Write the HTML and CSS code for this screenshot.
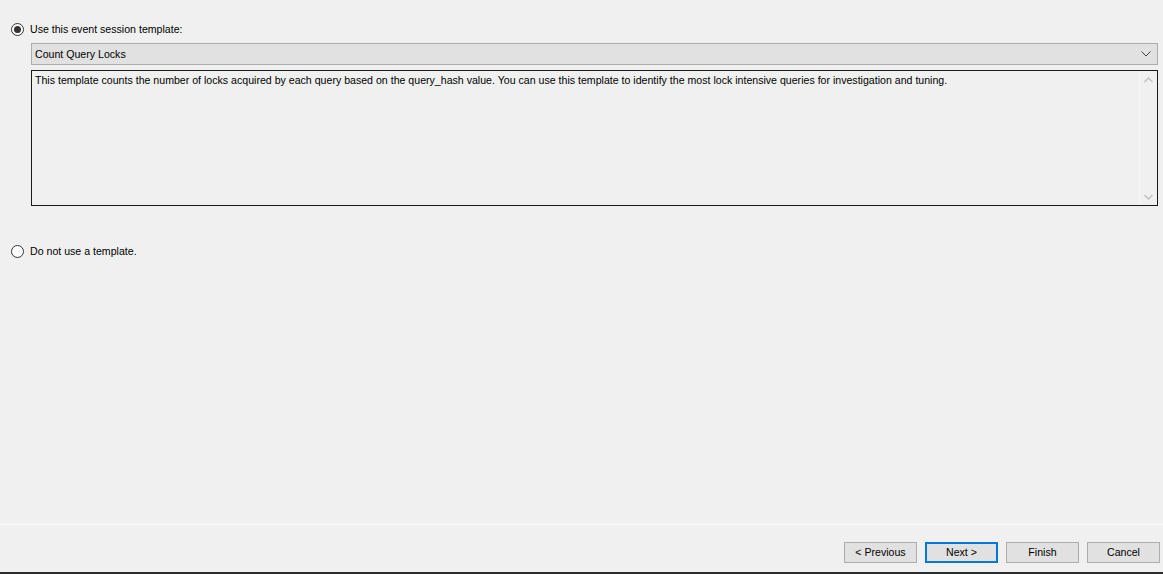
FILE: index.html
```html
<!DOCTYPE html>
<html>
<head>
<meta charset="utf-8">
<link rel="stylesheet" href="styles.css">
</head>
<body>
<div class="page">
  <div class="content">
    <label class="radio-row">
      <span class="radio checked"><span class="dot"></span></span>
      <span class="radio-label">Use this event session template:</span>
    </label>
    <div class="template-box">
      <div class="combo">
        <span class="combo-text">Count Query Locks</span>
        <svg class="combo-arrow" width="10" height="6" viewBox="0 0 10 6"><path d="M0.5 0.5 L5 5 L9.5 0.5" fill="none" stroke="#404040" stroke-width="1"/></svg>
      </div>
      <div class="desc">
        <div class="desc-text">This template counts the number of locks acquired by each query based on the query_hash value. You can use this template to identify the most lock intensive queries for investigation and tuning.</div>
        <div class="vscroll">
          <svg width="9" height="6" viewBox="0 0 9 6"><path d="M0.5 5 L4.5 1 L8.5 5" fill="none" stroke="#c0c0c0" stroke-width="1.3"/></svg>
          <svg width="9" height="6" viewBox="0 0 9 6"><path d="M0.5 1 L4.5 5 L8.5 1" fill="none" stroke="#c0c0c0" stroke-width="1.3"/></svg>
        </div>
      </div>
    </div>
    <label class="radio-row second">
      <span class="radio"></span>
      <span class="radio-label">Do not use a template.</span>
    </label>
  </div>
  <div class="footer">
    <div class="buttons">
      <button class="btn">&lt; Previous</button>
      <button class="btn default">Next &gt;</button>
      <button class="btn">Finish</button>
      <button class="btn">Cancel</button>
    </div>
  </div>
</div>
</body>
</html>
```
FILE: styles.css
```css
html, body {
  margin: 0;
  padding: 0;
  height: 100%;
}
body {
  background: #f0f0f0;
  font-family: "Liberation Sans", Arial, sans-serif;
  font-size: 10.6px;
  color: #000;
}
.page {
  height: 100%;
  display: flex;
  flex-direction: column;
  border-bottom: 2px solid #2b2b2b;
  box-sizing: border-box;
}
.content {
  flex: 1;
  padding: 22px 5px 0 11px;
}
.radio-row {
  display: flex;
  align-items: center;
  gap: 6px;
  height: 14px;
}
.radio {
  width: 11px;
  height: 11px;
  border: 1px solid #333;
  border-radius: 50%;
  background: #fff;
  display: flex;
  align-items: center;
  justify-content: center;
}
.dot {
  width: 7px;
  height: 7px;
  border-radius: 50%;
  background: #333;
}
.template-box {
  margin: 7px 0 0 20px;
}
.combo {
  height: 20px;
  border: 1px solid #adadad;
  background: #e1e1e1;
  display: flex;
  align-items: center;
  justify-content: space-between;
  padding: 0 6px 0 3px;
}
.desc {
  margin-top: 5px;
  height: 134px;
  border: 1px solid #1a1a1a;
  display: flex;
  background: #f0f0f0;
}
.desc-text {
  flex: 1;
  padding: 3px 3px;
  line-height: 13px;
}
.vscroll {
  width: 17px;
  border-left: 1px solid #f7f7f7;
  display: flex;
  flex-direction: column;
  justify-content: space-between;
  align-items: center;
  padding: 6px 0 5px;
}
.radio-row.second {
  margin-top: 38px;
}
.footer {
  border-top: 1px solid #fcfcfc;
  height: 48px;
  box-sizing: border-box;
  display: flex;
  justify-content: flex-end;
  padding: 17px 3px 0 0;
}
.buttons {
  display: flex;
  gap: 8px;
  align-items: flex-start;
}
.btn {
  width: 73px;
  height: 21px;
  border: 1px solid #adadad;
  background: #e1e1e1;
  font-family: "Liberation Sans", Arial, sans-serif;
  font-size: 10.6px;
  color: #000;
  padding: 0 0 1px;
}
.btn.default {
  border: 2px solid #0078d7;
}
```
